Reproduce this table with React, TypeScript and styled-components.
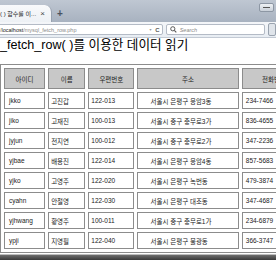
import React from "react";
import styled, { createGlobalStyle } from "styled-components";

const GlobalStyle = createGlobalStyle`
	html, body {
		margin: 0;
		padding: 0;
		overflow: hidden;
		background: #ffffff;
	}
`;

const columns = [
	{ title: "아이디", width: 41, pad: 4 },
	{ title: "이름", width: 37, pad: 2 },
	{ title: "우편번호", width: 46, pad: 2 },
	{ title: "주소", width: 101, pad: 12 },
	{ title: "전화번호", width: 64, pad: 3 },
];

const rows = [
	["jkko", "고진갑", "122-013", "서울시 은평구 응암3동", "234-7466"],
	["jiko", "고재진", "100-013", "서울시 중구 충무로3가", "836-4655"],
	["jyjun", "전지연", "100-012", "서울시 중구 충무로2가", "347-2236"],
	["yjbae", "배용진", "122-014", "서울시 은평구 응암4동", "857-5683"],
	["yjko", "고영주", "122-020", "서울시 은평구 녹번동", "479-3874"],
	["cyahn", "안철영", "122-030", "서울시 은평구 대조동", "347-4687"],
	["yjhwang", "황영주", "100-011", "서울시 중구 충무로1가", "234-6879"],
	["ypji", "지영필", "122-040", "서울시 은평구 불광동", "366-3747"],
];

const App = () => {
	return (
		<>
			<GlobalStyle />
			<Frame>
				<TitleBar>
					<Tab>
						<span className="label">( ) 함수를 이...</span>
						<span className="close">×</span>
					</Tab>
					<NewTab>+</NewTab>
					<WinButton />
				</TitleBar>
				<NavBar>
					<UrlField>
						<span className="url">
							/<b>localhost</b>/mysql_fetch_row.php
						</span>
						<span className="drop">▼</span>
						<span className="reload">C</span>
					</UrlField>
					<SearchField>
						<svg width="7" height="7" viewBox="0 0 10 10">
							<circle cx="4" cy="4" r="3" fill="none" stroke="#555" strokeWidth="1.4" />
							<path d="M6.2 6.2 L9 9" stroke="#555" strokeWidth="1.6" />
						</svg>
						<span>Search</span>
					</SearchField>
					<EdgeIcon />
				</NavBar>
				<Content>
					<Heading>_fetch_row( )를 이용한 데이터 읽기</Heading>
					<Table>
						<thead>
							<tr>
								{columns.map((c) => (
									<HeadCell key={c.title} $width={c.width}>
										{c.title}
									</HeadCell>
								))}
							</tr>
						</thead>
						<tbody>
							{rows.map((r) => (
								<tr key={r[0]}>
									{r.map((v, i) => (
										<Cell key={i} $pad={columns[i].pad}>
											{v}
										</Cell>
									))}
								</tr>
							))}
						</tbody>
					</Table>
				</Content>
				<BottomBar />
			</Frame>
		</>
	);
};

const Frame = styled.div`
	width: 276px;
	height: 260px;
	display: flex;
	flex-direction: column;
	overflow: hidden;
	font-family: "Liberation Sans", "Noto Sans CJK KR", sans-serif;
`;

const TitleBar = styled.div`
	height: 22px;
	flex: none;
	display: flex;
	align-items: flex-end;
	background: linear-gradient(#bfc7d2, #a8b2c0);
`;

const Tab = styled.div`
	width: 56px;
	height: 17px;
	margin-left: -4px;
	padding: 0 6px 0 4px;
	box-sizing: border-box;
	display: flex;
	align-items: center;
	justify-content: space-between;
	background: linear-gradient(#f8f9fb, #edf1f5);
	border-top-right-radius: 7px;
	border-right: 1px solid #98a2b0;
	font-size: 6px;
	color: #222;
	.label {
		white-space: nowrap;
	}
	.close {
		font-size: 8px;
		color: #444;
	}
`;

const NewTab = styled.div`
	margin: 0 0 3px 5px;
	font-size: 10px;
	font-weight: 700;
	color: #4a5260;
	line-height: 10px;
`;

const WinButton = styled.div`
	margin-left: auto;
	margin-right: 2px;
	align-self: flex-start;
	margin-top: 3px;
	width: 13px;
	height: 7px;
	border-radius: 2px;
	border: 1px solid #8d97a4;
	background: linear-gradient(#eef1f4, #c9d0d9);
	display: flex;
	align-items: center;
	justify-content: center;
	&::after {
		content: "";
		width: 7px;
		height: 1px;
		background: #555;
	}
`;

const NavBar = styled.div`
	height: 15px;
	flex: none;
	display: flex;
	align-items: center;
	gap: 3px;
	background: linear-gradient(#f4f6f9, #e8edf3);
	border-bottom: 1px solid #c3cad4;
`;

const UrlField = styled.div`
	width: 170px;
	height: 11px;
	margin-left: -3px;
	box-sizing: border-box;
	padding: 0 2px 0 2px;
	display: flex;
	align-items: center;
	background: #ffffff;
	border: 1px solid #b4bbc6;
	border-radius: 2px;
	font-size: 5.5px;
	color: #8a8a8a;
	.url {
		white-space: nowrap;
		flex: 1;
	}
	b {
		color: #222;
		font-weight: 400;
	}
	.drop {
		font-size: 3.5px;
		color: #999;
		margin-right: 3px;
	}
	.reload {
		font-size: 6px;
		color: #555;
		font-weight: 700;
	}
`;

const SearchField = styled.div`
	width: 102px;
	height: 11px;
	box-sizing: border-box;
	padding: 0 3px;
	display: flex;
	align-items: center;
	gap: 3px;
	background: #ffffff;
	border: 1px solid #b4bbc6;
	border-radius: 2px;
	font-size: 5.5px;
	font-style: italic;
	color: #8a8a8a;
`;

const EdgeIcon = styled.div`
	width: 6px;
	height: 11px;
	border: 1px solid #9aa3af;
	border-radius: 2px;
	background: #dfe4ea;
`;

const Content = styled.div`
	flex: 1;
	min-height: 0;
	background: #ffffff;
`;

const Heading = styled.h1`
	margin: 0;
	height: 26px;
	line-height: 14px;
	font-size: 12.6px;
	font-weight: 400;
	color: #000;
	white-space: nowrap;
`;

const Table = styled.table`
	border: 1px solid #8c8c8c;
	border-collapse: separate;
	border-spacing: 3px 3.4px;
	font-size: 6.5px;
	color: #222;
	table-layout: fixed;
	width: 310px;
`;

const HeadCell = styled.th<{ $width: number }>`
	width: ${(p) => p.$width}px;
	height: 21px;
	box-sizing: border-box;
	padding: 0;
	border: 1px solid #8c8c8c;
	background: #c8c8c8;
	font-weight: 400;
	text-align: center;
	white-space: nowrap;
	overflow: hidden;
`;

const Cell = styled.td<{ $pad: number }>`
	height: 17px;
	box-sizing: border-box;
	padding: 0 0 0 ${(p) => p.$pad}px;
	border: 1px solid #8c8c8c;
	text-align: left;
	white-space: nowrap;
	overflow: hidden;
`;

const BottomBar = styled.div`
	height: 5px;
	flex: none;
	border-top: 1px solid #bdbdbd;
	background: linear-gradient(#6e6e6e, #3a3a3a);
`;

export default App;
